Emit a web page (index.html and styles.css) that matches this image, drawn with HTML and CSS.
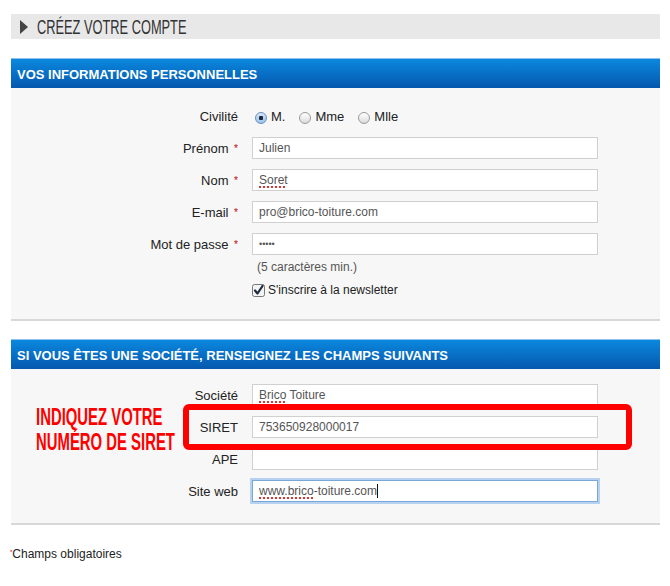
FILE: index.html
```html
<!DOCTYPE html>
<html lang="fr">
<head>
    <meta charset="UTF-8">
    <title>Créez votre compte</title>
    <link rel="stylesheet" href="styles.css">
</head>
<body>
    <div class="page">
        <h1 class="page-title"><span class="arrow"></span><span class="title-text">Créez votre compte</span></h1>

        <!-- Informations personnelles -->
        <h2 class="block-title">Vos informations personnelles</h2>
        <div class="block block-perso">
            <div class="row">
                <span class="label">Civilité</span>
                <div class="radios">
                    <label class="radio"><span class="dot checked"></span>M.</label>
                    <label class="radio"><span class="dot"></span>Mme</label>
                    <label class="radio"><span class="dot"></span>Mlle</label>
                </div>
            </div>
            <div class="row">
                <span class="label">Prénom <i class="req">*</i></span>
                <input type="text" class="field" value="Julien">
            </div>
            <div class="row">
                <span class="label">Nom <i class="req">*</i></span>
                <span class="field-wrap">
                    <input type="text" class="field" value="Soret">
                    <span class="overlay"><span class="typo">Soret</span></span>
                </span>
            </div>
            <div class="row">
                <span class="label">E-mail <i class="req">*</i></span>
                <input type="text" class="field" value="pro@brico-toiture.com">
            </div>
            <div class="row">
                <span class="label">Mot de passe <i class="req">*</i></span>
                <input type="password" class="field pass" value="12345">
            </div>
            <div class="row row-hint">
                <span class="label"></span>
                <span class="hint">(5 caractères min.)</span>
            </div>
            <div class="row row-check">
                <span class="label"></span>
                <label class="check">
                    <svg width="13" height="13" viewBox="0 0 13 13">
                        <rect x="0.5" y="0.5" width="12" height="12" rx="2" fill="#f4f4f4" stroke="#777"/>
                        <path d="M3 6.5 L5.5 9.5 L10.5 2" fill="none" stroke="#1c2a3c" stroke-width="2.2" stroke-linecap="round" stroke-linejoin="round"/>
                    </svg>
                    S'inscrire à la newsletter
                </label>
            </div>
        </div>

        <!-- Société -->
        <h2 class="block-title">Si vous êtes une société, renseignez les champs suivants</h2>
        <div class="block block-societe">
            <div class="row">
                <span class="label">Société</span>
                <span class="field-wrap">
                    <input type="text" class="field" value="Brico Toiture">
                    <span class="overlay"><span class="typo">Brico</span></span>
                </span>
            </div>
            <div class="row">
                <span class="label">SIRET</span>
                <input type="text" class="field" value="753650928000017">
            </div>
            <div class="row">
                <span class="label">APE</span>
                <input type="text" class="field" value="">
            </div>
            <div class="row">
                <span class="label">Site web</span>
                <span class="field-wrap">
                    <input type="text" class="field focus" value="www.brico-toiture.com">
                    <span class="overlay caret"><span class="typo">www.brico</span>-toiture.com</span>
                </span>
            </div>

            <p class="callout"><span>Indiquez votre</span><span>numéro de SIRET</span></p>
            <div class="callout-box"></div>
        </div>

        <p class="legend"><i class="req">*</i>Champs obligatoires</p>
    </div>
</body>
</html>
```

FILE: styles.css
```css
body {
    margin: 0;
    background-color: #fff;
    font-family: "Liberation Sans", Arial, sans-serif;
    color: #333;
}

.page {
    width: 649px;
    margin-left: 11px;
    padding-top: 14px;
}

.page-title {
    display: flex;
    align-items: center;
    height: 25px;
    margin: 0 0 19px 0;
    padding-left: 9px;
    background-color: #e8e8e8;
    font-weight: normal;
    font-size: 21px;
    text-transform: uppercase;
    color: #333;
    overflow: hidden;
}

.title-text {
    display: inline-block;
    transform: scaleX(0.61);
    transform-origin: left center;
    white-space: nowrap;
}

.arrow {
    flex-shrink: 0;
    width: 0;
    height: 0;
    margin-right: 9px;
    border-top: 7px solid transparent;
    border-bottom: 7px solid transparent;
    border-left: 8px solid #444;
}

.block-title {
    height: 30px;
    margin: 0;
    padding-left: 6px;
    line-height: 31px;
    background: linear-gradient(#0a88de, #0558ae);
    border-top: 1px solid #8fc2ec;
    box-sizing: border-box;
    font-size: 13px;
    font-weight: bold;
    text-transform: uppercase;
    color: #fff;
}

.block {
    position: relative;
    background-color: #f7f7f7;
    border-bottom: 2px solid #d8d8d8;
}

.block-perso {
    height: 233px;
    box-sizing: border-box;
    padding-top: 17px;
    margin-bottom: 18px;
}

.block-societe {
    height: 156px;
    box-sizing: border-box;
    padding-top: 15px;
}

.row {
    display: grid;
    grid-template-columns: 227px 346px;
    column-gap: 14px;
    align-items: center;
    height: 22px;
    margin-bottom: 10px;
}

.label {
    text-align: right;
    font-size: 13px;
    color: #222;
}

.req {
    font-style: normal;
    color: #c00;
    font-size: 10px;
    margin-left: 2px;
    position: relative;
    top: -1px;
}

.field-wrap {
    position: relative;
    display: block;
    height: 22px;
}

.field {
    width: 100%;
    height: 22px;
    margin: 0;
    padding: 0 6px;
    border: 1px solid #d0d0d0;
    background-color: #fff;
    box-sizing: border-box;
    font-family: "Liberation Sans", Arial, sans-serif;
    font-size: 12px;
    color: #555;
    outline: none;
}

.field.pass {
    font-size: 9px;
}

.field.focus {
    border-color: #7ba7d8;
    box-shadow: 0 0 0 2px #b7d2f0;
}

/* soulignement du correcteur orthographique + curseur */
.overlay {
    position: absolute;
    left: 7px;
    top: 4px;
    font-size: 12px;
    line-height: 14px;
    color: transparent;
    white-space: nowrap;
    pointer-events: none;
}

.typo {
    text-decoration: underline dotted #e03030;
    text-decoration-thickness: 2px;
    text-underline-offset: 2px;
}

.caret {
    border-right: 1px solid #111;
}

.radios {
    display: flex;
    gap: 14px;
    padding-left: 3px;
    font-size: 13px;
    color: #222;
}

.radio {
    display: flex;
    align-items: center;
    gap: 4px;
}

.dot {
    width: 12px;
    height: 12px;
    margin-top: 4px;
    border: 1px solid #9a9a9a;
    border-radius: 50%;
    box-sizing: border-box;
    background: linear-gradient(#fff, #dcdcdc);
}

.dot.checked {
    border-color: #6b8fbf;
    background: radial-gradient(circle, #1b2a3a 0 2px, transparent 2.5px), linear-gradient(#d6e8fa, #9cc2ea);
}

.row-hint {
    height: 14px;
    margin: -5px 0 8px 0;
}

.hint {
    padding-left: 5px;
    font-size: 12px;
    color: #555;
}

.row-check {
    height: 16px;
}

.check {
    display: flex;
    align-items: center;
    gap: 3px;
    font-size: 12px;
    color: #222;
}

.callout {
    position: absolute;
    left: 25px;
    top: 35px;
    margin: 0;
    font-weight: bold;
    font-size: 24px;
    line-height: 25px;
    text-transform: uppercase;
    color: #f00;
}

.callout span {
    display: block;
    width: 300px;
    transform: scaleX(0.62);
    transform-origin: left center;
    white-space: nowrap;
}

.callout-box {
    position: absolute;
    left: 172px;
    top: 35px;
    width: 449px;
    height: 46px;
    border: 6px solid #f00;
    border-radius: 6px;
    box-sizing: border-box;
}

.legend {
    margin: 22px 0 0 -1px;
    font-size: 12px;
    color: #222;
}

.legend .req {
    font-size: 6px;
    top: -4px;
    margin: 0;
}
```
